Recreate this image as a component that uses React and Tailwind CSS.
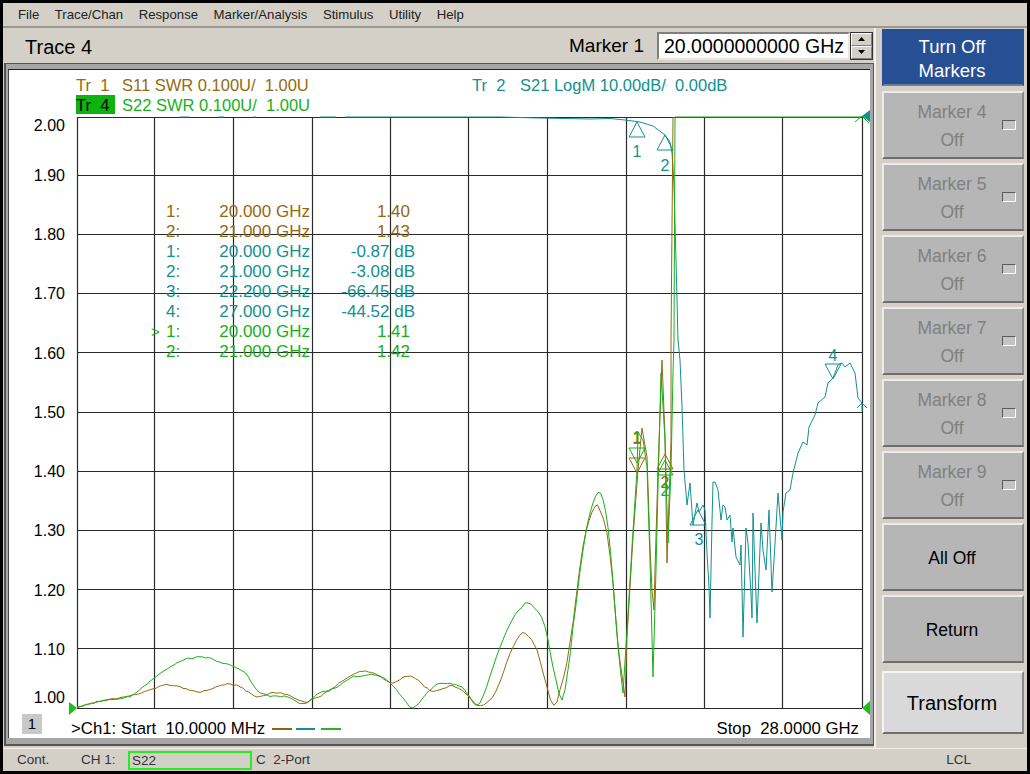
const BROWN = "#96690f";
const TEAL = "#12918f";
const GREEN = "#18b018";

const S21 = "500,117 540,118 590,119 610,118.5 625,120 640,122 653,126 665,135 670,142 672,153 673,167 674,187 676,260 678,340 680,360 682,407 684,470 687,505 690,483 693,525 697,503 699,512 703,505 705,510 707,553 709,587 710,618 712,522 713,482 715,482 718,490 721,520 723,505 725,507 727,520 730,515 732,542 733,528 736,557 740,565 741,545 743,637 746,528 748,543 751,595 752,618 753,513 755,570 757,623 761,523 763,550 766,570 769,510 772,592 774,560 778,493 782,540 783,512 786,493 790,490 793,473 798,453 803,442 807,445 809,427 815,415 818,403 825,397 828,383 833,378 838,365 842,363 845,367 850,363 855,373 858,398 862,403 862,411";
const S11 = "77,707 100,701 130,696 153,689 167,685 180,687 198,692 213,688 227,684 240,687 257,697 273,693 287,695 305,702 313,699 327,692 347,678 363,671 377,675 393,683 405,677 413,677 430,690 440,690 452,686 465,693 477,705 487,702 498,687 510,653 523,633 537,650 547,687 554,706 560,690 570,643 583,547 595,507 600,510 607,533 613,583 618,647 625,697 627,637 633,537 638,470 642,428 647,457 650,547 652,590 654,610 655,570 658,470 662,360 665,437 667,563 671,440 671,340 673,117";
const S22 = "77,707 100,701 130,696 153,679 177,663 200,657 220,662 245,672 257,690 270,696 287,697 303,704 320,693 337,687 350,678 360,676 377,675 390,683 403,698 413,708 430,690 442,683 462,687 470,697 476,705 483,697 493,667 500,647 512,620 522,607 528,603 538,612 545,627 553,667 562,700 568,670 573,627 583,550 590,513 598,493 603,500 608,527 613,583 620,667 623,693 627,630 632,547 637,470 638,432 643,440 647,467 650,560 653,677 656,570 658,487 661,373 665,440 668,543 671,470 673,373 674,340 675,117 862,117";

// Smooth the slow low-frequency part of a trace and give it the instrument's small ripple.
function ripple(src, seed) {
  const p = src.split(" ").map((s) => s.split(",").map(Number));
  const out = [];
  for (let i = 0; i < p.length - 1; i++) {
    const [x1, y1] = p[i];
    const [x2, y2] = p[i + 1];
    if (x2 > 622) {
      out.push([x1, y1]);
      continue;
    }
    const p0 = p[Math.max(i - 1, 0)];
    const p3 = p[i + 2];
    const n = Math.max(1, Math.round((x2 - x1) / 3));
    for (let k = 0; k < n; k++) {
      const t = k / n;
      const t2 = t * t;
      const t3 = t2 * t;
      const x = x1 + (x2 - x1) * t;
      const y =
        0.5 *
        (2 * y1 +
          (-p0[1] + y2) * t +
          (2 * p0[1] - 5 * y1 + 4 * y2 - p3[1]) * t2 +
          (-p0[1] + 3 * y1 - 3 * y2 + p3[1]) * t3);
      const j = Math.sin(x * 12.9898 + seed) * 43758.5453;
      const noise = (j - Math.floor(j) - 0.5) * 1.3;
      out.push([x.toFixed(1), Math.min(708, y + noise).toFixed(1)]);
    }
  }
  out.push(p[p.length - 1]);
  return out.map((q) => q.join(",")).join(" ");
}

const VLINES = [77, 154, 233, 312, 390, 468, 547, 626, 704, 782, 862];
const HLINES = [117, 175, 234, 293, 352, 412, 471, 530, 589, 648, 708];
const AXIS = [
  ["2.00", 125], ["1.90", 175], ["1.80", 234], ["1.70", 293], ["1.60", 353], ["1.50", 412],
  ["1.40", 471], ["1.30", 530], ["1.20", 590], ["1.10", 649], ["1.00", 697],
];

const MARKERS = [
  { c: BROWN, m: "", n: "1:", f: "20.000 GHz", v: "1.40", u: false },
  { c: BROWN, m: "", n: "2:", f: "21.000 GHz", v: "1.43", u: false },
  { c: TEAL, m: "", n: "1:", f: "20.000 GHz", v: "-0.87 dB", u: true },
  { c: TEAL, m: "", n: "2:", f: "21.000 GHz", v: "-3.08 dB", u: true },
  { c: TEAL, m: "", n: "3:", f: "22.200 GHz", v: "-66.45 dB", u: true },
  { c: TEAL, m: "", n: "4:", f: "27.000 GHz", v: "-44.52 dB", u: true },
  { c: GREEN, m: ">", n: "1:", f: "20.000 GHz", v: "1.41", u: false },
  { c: GREEN, m: "", n: "2:", f: "21.000 GHz", v: "1.42", u: false },
];

function Tri({ x, y, up, c }) {
  const by = up ? y + 15 : y - 15;
  return <polygon points={`${x},${y} ${x - 8},${by} ${x + 8},${by}`} fill="none" stroke={c} strokeWidth="1" />;
}

function Plot() {
  return (
    <svg viewBox="9 110 862 606" className="block w-[862px] h-[606px]">
      {VLINES.map((x) => (
        <line key={x} x1={x + 0.5} x2={x + 0.5} y1="117" y2="708" stroke="#2a2a2a" strokeWidth="1.2" />
      ))}
      {HLINES.map((y) => (
        <line key={y} x1="77" x2="862" y1={y + 0.5} y2={y + 0.5} stroke="#2a2a2a" strokeWidth="1.2" />
      ))}
      {AXIS.map(([t, y]) => (
        <text key={t} x="65" y={y + 6} textAnchor="end" fontSize="16" fill="#000">{t}</text>
      ))}
      <path d="M180,117h9M218,117h6M253,117h3M320,117h16M345,117h155" fill="none" stroke={TEAL} strokeWidth="1" />
      <polyline points={S21} fill="none" stroke={TEAL} strokeWidth="1" />
      <polyline points={ripple(S11, 1.7)} fill="none" stroke={BROWN} strokeWidth="1" />
      <polyline points={ripple(S22, 4.3)} fill="none" stroke={GREEN} strokeWidth="1" />

      <Tri x={637} y={122} up c={TEAL} />
      <Tri x={665} y={135} up c={TEAL} />
      <Tri x={698} y={510} up c={TEAL} />
      <Tri x={833} y={379} c={TEAL} />
      <Tri x={637} y={473} c={BROWN} />
      <Tri x={665} y={454} up c={BROWN} />
      <Tri x={637} y={463} c={GREEN} />
      <Tri x={665} y={460} up c={GREEN} />
      <text x="637" y="157" textAnchor="middle" fontSize="16" fill={TEAL}>1</text>
      <text x="665" y="171" textAnchor="middle" fontSize="16" fill={TEAL}>2</text>
      <text x="699" y="545" textAnchor="middle" fontSize="16" fill={TEAL}>3</text>
      <text x="833" y="361" textAnchor="middle" fontSize="16" fill={TEAL}>4</text>
      <text x="637" y="443" textAnchor="middle" fontSize="16" fill={BROWN}>1</text>
      <text x="637" y="444" textAnchor="middle" fontSize="16" fill={GREEN}>1</text>
      <text x="665" y="488" textAnchor="middle" fontSize="16" fill={BROWN}>2</text>
      <text x="665" y="496" textAnchor="middle" fontSize="16" fill={GREEN}>2</text>

      <polygon points="862,116 870,110 870,122" fill={TEAL} />
      <path d="M855,122 L862,116 L869,123" fill="none" stroke={GREEN} strokeWidth="1" />
      <path d="M857,408 L862,403 L867,408" fill="none" stroke={TEAL} strokeWidth="1" />
      <polygon points="862,708 870,701 870,715" fill="#18c018" />
      <polygon points="77,708 69,702 69,715" fill="#18c018" />
    </svg>
  );
}

function SideButton({ lines, h, disabled, tone, led, big, lead, size }) {
  const face =
    tone === "blue"
      ? "bg-[#264f94] text-white border-[#264f94] border-b-[#6f7f96]"
      : tone === "light"
      ? "bg-[#d9d9d9] text-black border-t-[#f4f4f4] border-l-[#f4f4f4] border-b-[#6e6e6e] border-r-[#8a8a8a]"
      : "bg-[#b6b6b6] border-t-[#ececec] border-l-[#ececec] border-b-[#6e6e6e] border-r-[#8a8a8a]";
  const text = disabled ? "text-[#808080]" : tone === "blue" || tone === "light" ? "" : "text-black";
  return (
    <div className={`relative w-[142px] flex flex-col items-center justify-center border-2 ${big ? "" : "pt-[2px]"} ${face} ${text} ${h} ${size || "text-[17.5px]"} ${lead || ""}`}>
      {lines.map((l) => (
        <span key={l} className="-ml-[2px]">{l}</span>
      ))}
      {led && (
        <span className="absolute right-[6px] top-[27px] w-[14px] h-[10px] bg-[#c4c4c4] border border-t-[#5a5a5a] border-l-[#5a5a5a] border-b-white border-r-white" />
      )}
    </div>
  );
}

function Spin({ down }) {
  return (
    <div className="flex-1 flex items-center justify-center bg-[#d4d0c8] border border-t-white border-l-white border-b-[#808080] border-r-[#808080]">
      <svg width="7" height="4" viewBox="0 0 7 4">
        <polygon points={down ? "0,0 7,0 3.5,4" : "3.5,0 7,4 0,4"} fill="#000" />
      </svg>
    </div>
  );
}

export default function App() {
  return (
    <div className="w-[1030px] h-[774px] bg-black pt-[3px] pl-[3px] pr-[3px] pb-[3px] font-['Liberation_Sans',Arial,sans-serif] overflow-hidden">
      <div className="w-full h-[768px] bg-[#d4d0c8] flex flex-col">
        {/* menu */}
        <div className="h-[25px] shrink-0 flex items-center gap-[15.5px] pl-[15px] text-[13.2px] text-[#222] border-b-2 border-b-[#9a9890]">
          <span>File</span>
          <span>Trace/Chan</span>
          <span>Response</span>
          <span>Marker/Analysis</span>
          <span>Stimulus</span>
          <span>Utility</span>
          <span>Help</span>
        </div>

        <div className="flex flex-1 min-h-0">
          {/* left */}
          <div className="w-[873px] shrink-0 flex flex-col border-r-2 border-r-[#f2f0ea]">
            <div className="h-[35px] shrink-0 flex items-center pl-[22px] pr-[1px]">
              <span className="text-[20px] text-black pt-[2px]">Trace 4</span>
              <span className="ml-auto text-[19px] text-black mr-[13px] pt-[2px]">Marker 1</span>
              <div className="w-[193px] h-[28px] bg-white border-2 border-t-[#808080] border-l-[#808080] border-b-[#e8e6e0] border-r-[#e8e6e0] text-[19.5px] leading-[24px] pl-[5px] whitespace-nowrap overflow-hidden text-black">
                20.0000000000 GHz
              </div>
              <div className="w-[23px] h-[28px] flex flex-col border border-[#333]">
                <Spin />
                <Spin down />
              </div>
            </div>

            {/* chart frame */}
            <div className="ml-[1px] w-[870px] h-[683px] bg-[#a6a6a6] border-t border-l-2 border-r border-b-2 border-[#555] pt-[5px] pl-[2px] pr-[3px] pb-[6px]">
              <div className="relative w-[862px] h-[669px] bg-white border-t border-l border-t-[#222] border-l-[#444] flex flex-col">
                <div className="h-[40px] shrink-0 relative text-[16.5px] leading-[20px] whitespace-pre">
                  <div className="flex pl-[67px] pt-[5px] h-[25px]" style={{ color: BROWN }}>
                    <span className="w-[46px]">Tr  1</span>
                    <span className="w-[350px]">S11 SWR 0.100U/  1.00U</span>
                    <span style={{ color: TEAL }} className="w-[47px]">Tr  2</span>
                    <span style={{ color: TEAL }} className="ml-[1px]">S21 LogM 10.00dB/  0.00dB</span>
                  </div>
                  <div className="flex pl-[67px] h-[20px]" style={{ color: GREEN }}>
                    <span className="w-[39px] h-[19px] bg-[#0fb30f] text-black">Tr  4</span>
                    <span className="ml-[7px]">S22 SWR 0.100U/  1.00U</span>
                  </div>
                </div>

                <div className="relative shrink-0 h-[606px]">
                  <Plot />
                  <div className="absolute left-[142px] top-[92px] w-[264px] grid grid-cols-[15px_144px_105px] text-[17px] leading-[20px] whitespace-pre">
                    {MARKERS.map((r, i) => (
                      <div key={i} className="contents" style={{ color: r.c }}>
                        <span className="text-[15px]">{r.m}</span>
                        <span className="relative">
                          <span className="absolute left-0">{r.n}</span>
                          <span className="block text-right">{r.f}</span>
                        </span>
                        <span className={r.u ? "text-right" : "text-right pr-[5px]"}>{r.v}</span>
                      </div>
                    ))}
                  </div>
                </div>

                <div className="flex-1 relative flex items-center pl-[62px] pr-[11px] text-[16.75px] text-black whitespace-pre">
                  <span className="absolute left-[13px] top-[-2px] w-[20px] h-[20px] bg-[#c8c8c8] flex items-center justify-center text-[15px]">1</span>
                  <span>&gt;Ch1: Start  10.0000 MHz</span>
                  <span className="ml-[7px] w-[20px] h-[2px]" style={{ background: "#8a6414" }} />
                  <span className="ml-[4px] w-[19px] h-[2px]" style={{ background: "#1a8a9a" }} />
                  <span className="ml-[6px] w-[20px] h-[2px]" style={{ background: "#2fae2f" }} />
                  <span className="ml-auto">Stop  28.0000 GHz</span>
                </div>
              </div>
            </div>
          </div>

          {/* right */}
          <div className="flex-1 flex flex-col gap-[4px] pl-[6px] pt-[1px]">
            <SideButton lines={["Turn Off", "Markers"]} h="h-[57px] mb-[1px]" tone="blue" lead="leading-[24px]" size="text-[18.5px]" />
            <SideButton lines={["Marker 4", "Off"]} h="h-[68px]" disabled led lead="leading-[28px]" />
            <SideButton lines={["Marker 5", "Off"]} h="h-[68px]" disabled led lead="leading-[28px]" />
            <SideButton lines={["Marker 6", "Off"]} h="h-[68px]" disabled led lead="leading-[28px]" />
            <SideButton lines={["Marker 7", "Off"]} h="h-[68px]" disabled led lead="leading-[28px]" />
            <SideButton lines={["Marker 8", "Off"]} h="h-[68px]" disabled led lead="leading-[28px]" />
            <SideButton lines={["Marker 9", "Off"]} h="h-[68px]" disabled led lead="leading-[28px]" />
            <SideButton lines={["All Off"]} h="h-[68px]" />
            <SideButton lines={["Return"]} h="h-[68px]" />
            <SideButton lines={["Transform"]} h="h-[63px] mt-[4px]" tone="light" big size="text-[20px]" />
          </div>
        </div>

        {/* status */}
        <div className="h-[23px] shrink-0 flex items-center pl-[14px] text-[13.5px] text-[#333] border-t border-t-[#f2f0ea] whitespace-pre">
          <span className="w-[64px]">Cont.</span>
          <span className="w-[47px]">CH 1:</span>
          <span className="w-[124px] h-[19px] border-2 border-[#22ee22] pl-[2px] leading-[16px]">S22</span>
          <span className="ml-[4px]">C  2-Port</span>
          <span className="ml-auto mr-[56px]">LCL</span>
        </div>
      </div>
    </div>
  );
}
